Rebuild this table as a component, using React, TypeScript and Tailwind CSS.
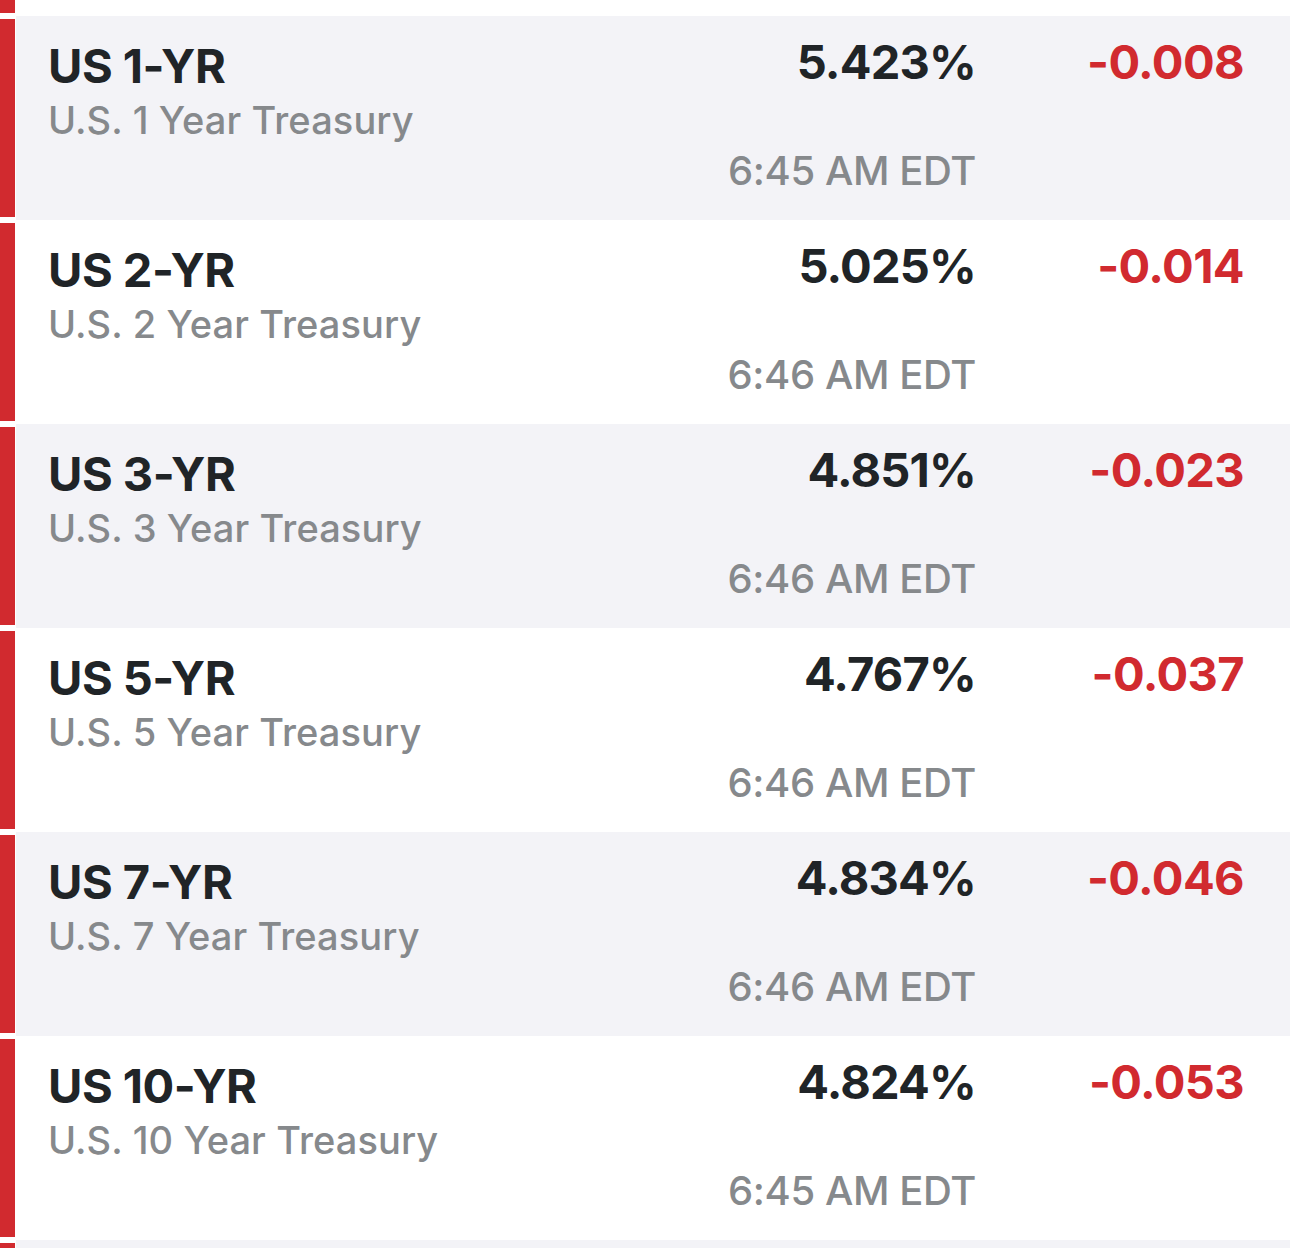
import React from "react";

const rows = [
  { t: "US 1-YR", s: "U.S. 1 Year Treasury", v: "5.423%", c: "-0.008", time: "6:45 AM EDT" },
  { t: "US 2-YR", s: "U.S. 2 Year Treasury", v: "5.025%", c: "-0.014", time: "6:46 AM EDT" },
  { t: "US 3-YR", s: "U.S. 3 Year Treasury", v: "4.851%", c: "-0.023", time: "6:46 AM EDT" },
  { t: "US 5-YR", s: "U.S. 5 Year Treasury", v: "4.767%", c: "-0.037", time: "6:46 AM EDT" },
  { t: "US 7-YR", s: "U.S. 7 Year Treasury", v: "4.834%", c: "-0.046", time: "6:46 AM EDT" },
  { t: "US 10-YR", s: "U.S. 10 Year Treasury", v: "4.824%", c: "-0.053", time: "6:45 AM EDT" },
];

function Row({ r, gray }: { r: (typeof rows)[number]; gray: boolean }) {
  return (
    <div className="flex h-[204px]">
      <div className="w-[15px] my-[3px] bg-[#d12a2f]" />
      <div
        className={`flex-1 ml-px flex pl-[32px] pr-[46px] pt-[26px] ${gray ? "bg-[#f3f3f7]" : "bg-white"}`}
      >
        <div className="flex-1 flex flex-col">
          <div className="text-[47px] leading-[47px] font-bold text-[#202427] tracking-[-0.5px]">{r.t}</div>
          <div className="text-[38px] leading-[38px] font-medium text-[#86898c] mt-[12px] tracking-[0.1px]">{r.s}</div>
        </div>
        <div className="flex flex-col items-end">
          <div className="text-[47px] leading-[47px] font-bold text-[#202427] -mt-[4px] tracking-[-0.8px]">{r.v}</div>
          <div className="text-[40px] leading-[40px] font-medium text-[#86898c] mt-[66px] tracking-[-0.4px]">{r.time}</div>
        </div>
        <div className="w-[268px] flex flex-col items-end">
          <div className="text-[47px] leading-[47px] font-bold text-[#d12a2f] -mt-[4px] tracking-[-0.6px]">{r.c}</div>
        </div>
      </div>
    </div>
  );
}

export default function App() {
  return (
    <div
      className="w-[1290px] h-[1248px] overflow-hidden bg-white"
      style={{ fontFamily: "Inter, 'Noto Sans', sans-serif" }}
    >
      <div className="flex h-[16px]">
        <div className="w-[15px] mb-[3px] bg-[#d12a2f]" />
      </div>
      {rows.map((r, i) => (
        <Row key={i} r={r} gray={i % 2 === 0} />
      ))}
      <div className="flex h-[204px]">
        <div className="w-[15px] my-[3px] bg-[#d12a2f]" />
        <div className="flex-1 ml-px bg-[#f3f3f7]" />
      </div>
    </div>
  );
}
